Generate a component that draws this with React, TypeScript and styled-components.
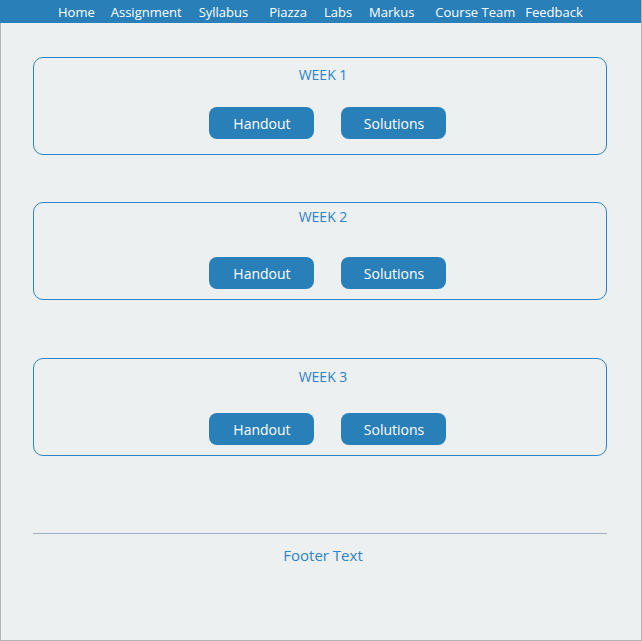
import React from "react";
import styled, { createGlobalStyle } from "styled-components";

const Global = createGlobalStyle`
  html, body { margin: 0; padding: 0; background: #ecf0f1; }
  body { font-family: "Open Sans", "Liberation Sans", sans-serif; }
  * { box-sizing: border-box; }
`;

const Frame = styled.div`
  width: 642px;
  height: 641px;
  border: 1px solid #b4b4b4;
  border-top: 0;
  background: #ecf0f1;
  display: flex;
  flex-direction: column;
`;

const Nav = styled.nav`
  height: 23px;
  margin-left: -1px;
  background: #2980b9;
  display: flex;
  align-items: center;
  padding-left: 58px;
  padding-top: 2px;
`;

const NavLink = styled.a<{ $gap: number }>`
  margin-left: ${(p) => p.$gap}px;
  color: #ffffff;
  font-size: 13px;
  line-height: 21px;
  text-decoration: none;
  white-space: nowrap;
`;

const Main = styled.main`
  display: flex;
  flex-direction: column;
  padding: 34px 34px 0 32px;
`;

const Card = styled.section<{ $top: number }>`
  height: 98px;
  margin-top: ${(p) => p.$top}px;
  border: 1px solid #2f84c3;
  border-radius: 10px;
  display: flex;
  flex-direction: column;
  align-items: center;
  padding-left: 6px;
`;

const Title = styled.h2<{ $pad: number }>`
  margin: ${(p) => p.$pad}px 0 0;
  font-size: 14px;
  line-height: 20px;
  font-weight: 400;
  color: #2f84c3;
`;

const ButtonRow = styled.div<{ $gap: number }>`
  display: flex;
  gap: 27px;
  margin-top: ${(p) => p.$gap}px;
  padding-left: 8px;
`;

const Button = styled.button`
  width: 105px;
  height: 32px;
  border: 0;
  border-radius: 8px;
  background: #2980b9;
  color: #ffffff;
  font-family: "Open Sans", "Liberation Sans", sans-serif;
  font-size: 14px;
  padding: 0 0 0 2px;
  cursor: pointer;
`;

const Footer = styled.footer`
  margin-top: 77px;
  border-top: 1px solid #9fb0c6;
  padding-top: 12px;
  padding-left: 6px;
  text-align: center;
  font-size: 15px;
  line-height: 19px;
  color: #2f84c3;
`;

const links: [string, number][] = [
  ["Home", 0],
  ["Assignment", 16],
  ["Syllabus", 17],
  ["Piazza", 21],
  ["Labs", 17],
  ["Markus", 17],
  ["Course Team", 21],
  ["Feedback", 10],
];

const weeks = [
  { name: "WEEK 1", top: 0, pad: 7, gap: 22 },
  { name: "WEEK 2", top: 47, pad: 4, gap: 30 },
  { name: "WEEK 3", top: 58, pad: 8, gap: 26 },
];

export default function App() {
  return (
    <>
      <Global />
      <Frame>
        <Nav>
          {links.map(([l, g]) => (
            <NavLink key={l} href="#" $gap={g}>
              {l}
            </NavLink>
          ))}
        </Nav>
        <Main>
          {weeks.map((w) => (
            <Card key={w.name} $top={w.top}>
              <Title $pad={w.pad}>{w.name}</Title>
              <ButtonRow $gap={w.gap}>
                <Button>Handout</Button>
                <Button>Solutions</Button>
              </ButtonRow>
            </Card>
          ))}
          <Footer>Footer Text</Footer>
        </Main>
      </Frame>
    </>
  );
}
